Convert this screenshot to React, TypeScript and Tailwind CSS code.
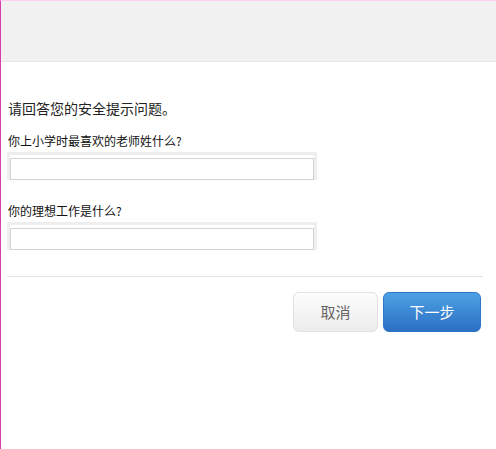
import React from 'react';

const font = { fontFamily: '"Noto Sans CJK SC", "Noto Sans", sans-serif' };

const Field = ({ label }: { label: string }) => (
  <div className="flex flex-col">
    <label className="text-[12px] leading-[16px] text-[#111] mb-[3px] pl-px">{label}</label>
    <div className="w-[310px] h-[28px] border-[3px] border-[#eeeeee]">
      <input className="w-full h-full border border-[#d3d3d3] bg-white outline-none px-1 text-[12px]" />
    </div>
  </div>
);

const App = () => {
  return (
    <div className="w-[496px] h-[449px] bg-white border-l border-t border-l-[#d63fb3] border-t-[#fbd0f0] flex flex-col" style={font}>
      <div className="h-[61px] bg-[#f1f1f1] border-b border-[#e7e7e7]" />
      <div className="pl-[6px] pr-[13px] pt-[37px] flex flex-col">
        <p className="text-[14px] leading-[18px] text-[#222] pl-px">请回答您的安全提示问题。</p>
        <div className="mt-[16px] flex flex-col gap-[23px]">
          <Field label="你上小学时最喜欢的老师姓什么?" />
          <Field label="你的理想工作是什么?" />
        </div>
        <div className="mt-[26px] h-px bg-[#e3e3e3]" />
        <div className="mt-[15px] flex justify-end gap-[5px] pr-[2px]">
          <button className="w-[85px] h-[40px] rounded-[6px] border border-[#e2e2e2] bg-gradient-to-b from-[#fdfdfd] to-[#ececec] text-[15px] text-[#666]">
            取消
          </button>
          <button className="w-[98px] h-[40px] rounded-[6px] border border-[#2f74c8] bg-gradient-to-b from-[#4ea1e4] to-[#2c6fc4] text-[15px] text-white">
            下一步
          </button>
        </div>
      </div>
    </div>
  );
};

export default App;
